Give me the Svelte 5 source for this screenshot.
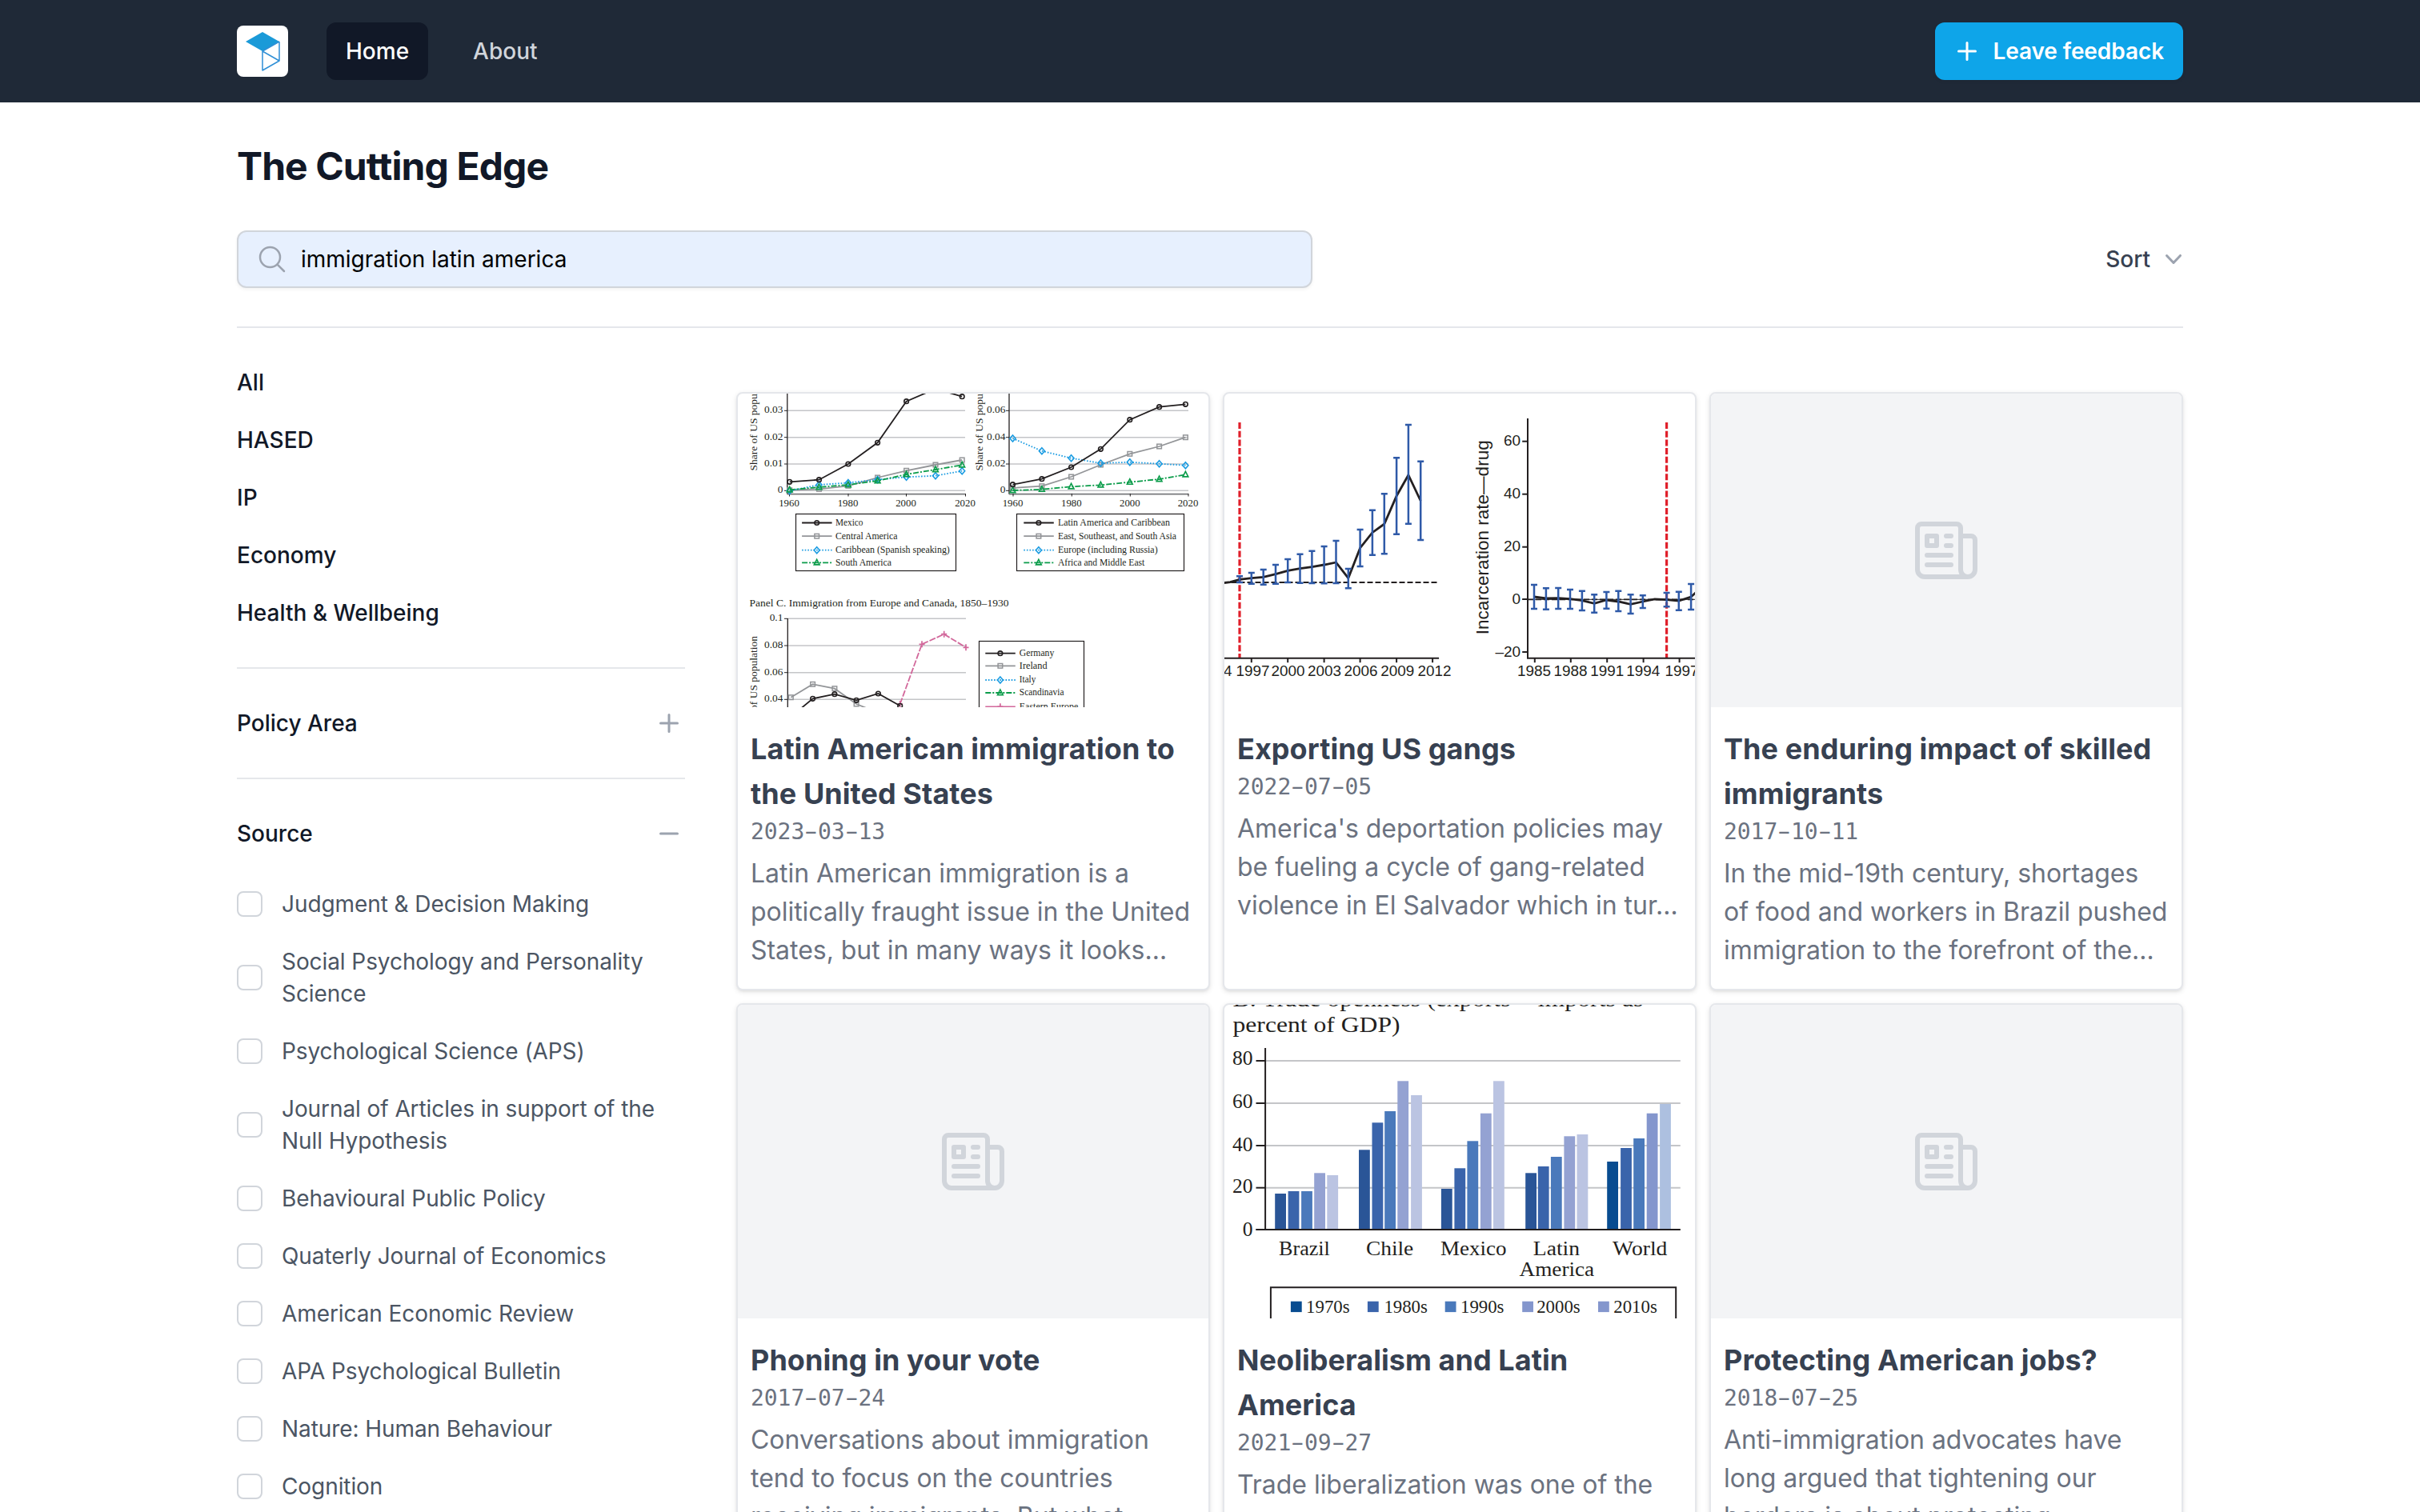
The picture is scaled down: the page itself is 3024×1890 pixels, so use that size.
<script>
  const categories = ['All', 'HASED', 'IP', 'Economy', 'Health & Wellbeing'];
  const sources = [
    'Judgment & Decision Making',
    'Social Psychology and Personality Science',
    'Psychological Science (APS)',
    'Journal of Articles in support of the Null Hypothesis',
    'Behavioural Public Policy',
    'Quaterly Journal of Economics',
    'American Economic Review',
    'APA Psychological Bulletin',
    'Nature: Human Behaviour',
    'Cognition'
  ];
  const articles = [
    { chart: 'shares', title: 'Latin American immigration to the United States', date: '2023-03-13', text: 'Latin American immigration is a politically fraught issue in the United States, but in many ways it looks…' },
    { chart: 'gangs', title: 'Exporting US gangs', date: '2022-07-05', text: "America's deportation policies may be fueling a cycle of gang-related violence in El Salvador which in tur…" },
    { chart: '', title: 'The enduring impact of skilled immigrants', date: '2017-10-11', text: 'In the mid-19th century, shortages of food and workers in Brazil pushed immigration to the forefront of the…' },
    { chart: '', title: 'Phoning in your vote', date: '2017-07-24', text: 'Conversations about immigration tend to focus on the countries receiving immigrants. But what…' },
    { chart: 'trade', title: 'Neoliberalism and Latin America', date: '2021-09-27', text: 'Trade liberalization was one of the' },
    { chart: '', title: 'Protecting American jobs?', date: '2018-07-25', text: 'Anti-immigration advocates have long argued that tightening our borders is about protecting…' }
  ];

  // Immigration share charts: series share x positions and list only y values.
  const BLACK = '#231f20', GREY = '#939598', BLUE = '#1b9ce2', GREEN = '#0b9c4a', PINK = '#d2689b';
  const leftX = [64.7, 101.5, 137.9, 174.6, 210.6, 247, 280.2];
  const rightX = [343.5, 379.9, 416.6, 453.4, 489.8, 526.6, 559.4];
  const lowX = [66.3, 93.6, 120.9, 148.1, 175.4, 202.7];
  const zip = (xs, ys) => ys.map((y, i) => [xs[i], y]);
  const series = [
    { m: 'square', c: GREY, d: '', p: zip(leftX, [120.7, 119.3, 115.3, 105, 96.3, 89, 83]) },
    { m: 'diamond', c: BLUE, d: '1.6 2', p: zip(leftX, [121.5, 114, 111.5, 107.5, 104.3, 102.7, 96.7]) },
    { m: 'triangle', c: GREEN, d: '7 2 2 2', p: zip(leftX, [120.3, 117, 114, 109, 101, 95, 89.3]) },
    { m: 'circle', c: BLACK, d: '', p: zip(leftX, [110.3, 107.7, 88, 61.3, 9.7, -6, 3.7]) },
    { m: 'square', c: GREY, d: '', p: zip(rightX, [118, 115.7, 104, 89, 75.3, 66, 54.7]) },
    { m: 'diamond', c: BLUE, d: '1.6 2', p: zip(rightX, [56, 71.7, 80.7, 87, 85.7, 87.7, 89.7]) },
    { m: 'triangle', c: GREEN, d: '7 2 2 2', p: zip(rightX, [121, 119.7, 116.3, 114.3, 110.7, 107, 101.3]) },
    { m: 'circle', c: BLACK, d: '', p: zip(rightX, [113.7, 106.7, 92, 69.3, 32.7, 16.7, 13.3]) },
    { m: 'square', c: GREY, d: '', p: zip(lowX, [379.7, 363.3, 368.7, 388, 399]) },
    { m: 'plus', c: PINK, d: '8 2', p: [[202.7, 388], [230, 313.3], [257.7, 300.7], [285, 317.3]] },
    { m: 'circle', c: BLACK, d: '', p: zip(lowX, [404, 381.3, 375.7, 383.3, 375, 390.3]) }
  ];
  const styles = [['circle', BLACK, ''], ['square', GREY, ''], ['diamond', BLUE, '1.6 2'], ['triangle', GREEN, '7 2 2 2'], ['plus', PINK, '']];
  const legends = [
    { x: 80.1, tx: 122, ys: [161.5, 178.2, 195.7, 211.3], items: [['Mexico', 34.4], ['Central America', 77.5], ['Caribbean (Spanish speaking)', 142.8], ['South America', 70]] },
    { x: 357.3, tx: 400, ys: [161.5, 178.2, 195.7, 211.3], items: [['Latin America and Caribbean', 140], ['East, Southeast, and South Asia', 148], ['Europe (including Russia)', 124.6], ['Africa and Middle East', 108.3]] },
    { x: 309.3, tx: 351.8, ys: [324.7, 340.3, 358, 374, 391.3], items: [['Germany', 43.5], ['Ireland', 34.8], ['Italy', 20.5], ['Scandinavia', 55.7], ['Eastern Europe', 73.5]] }
  ];
  const grids = [
    { x1: 62, x2: 284, tx: 56.4, rows: [[21.3, '0.03'], [54.7, '0.02'], [88, '0.01'], [121.3, '0']] },
    { x1: 339, x2: 563, tx: 334.5, rows: [[21.3, '0.06'], [54.7, '0.04'], [88, '0.02'], [121.3, '0']] },
    { x1: 62, x2: 285, tx: 56.4, rows: [[281.3, '0.1'], [315, '0.08'], [348.7, '0.06'], [382.3, '0.04']] }
  ];
  const years = [[64, '1960'], [137.5, '1980'], [210, '2000'], [284, '2020'], [343.5, '1960'], [416.8, '1980'], [489.8, '2000'], [562.5, '2020']];
  const pts = (p) => p.map((q) => q.join(',')).join(' ');

  // Plot units for the two scanned figures.
  const X = (v) => +(v * 0.4018 - 20).toFixed(1);
  const Y = (v) => +(v / 3 - 12).toFixed(1);
  const Z = (v) => +(v / 3 - 16).toFixed(1);

  const bars = [
    [97, 721, 744], [134, 708, 749], [171, 696, 752], [209, 678, 749], [247, 657, 744], [285, 638, 746], [322, 626, 747], [360, 609, 748],
    [397, 588, 747], [435, 693, 766], [472, 546, 684], [510, 473, 641], [547, 412, 637], [585, 277, 563], [622, 153, 524], [660, 290, 585],
    [1013, 753, 843], [1050, 766, 845], [1088, 765, 843], [1125, 771, 843], [1162, 776, 849], [1200, 790, 857], [1238, 780, 842],
    [1275, 776, 852], [1313, 790, 861], [1351, 793, 840], [1425, 783, 835], [1463, 779, 848], [1501, 750, 846]
  ];
  const trends = [
    [[46, 746], [68, 743], [97, 733], [134, 728], [171, 724], [209, 713], [247, 700], [285, 692], [322, 686], [360, 678], [397, 669], [435, 728], [472, 615], [510, 557], [547, 525], [585, 420], [622, 341], [660, 438]],
    [[1013, 798], [1050, 804], [1088, 803], [1125, 806], [1162, 812], [1200, 823], [1238, 810], [1275, 816], [1313, 826], [1351, 816], [1388, 807], [1425, 809], [1463, 813], [1501, 798], [1518, 780]]
  ];
  const trendPts = (t) => t.map(([x, y]) => X(x) + ',' + Y(y)).join(' ');
  const gangYears = [[21, '1994'], [138, '1997'], [248, '2000'], [361, '2003'], [474, '2006'], [588, '2009'], [703, '2012'], [1013, '1985'], [1126, '1988'], [1240, '1991'], [1352, '1994'], [1472, '1997']];
  const gangTicks = [134, 247, 360, 472, 585, 697, 1015, 1127, 1240, 1353, 1465];
  const gangRows = [[215, '60'], [413, '40'], [611, '20'], [807, '0'], [1005, '–20']];

  const shades = ['#2a5597', '#3a64ab', '#4a79bb', '#94a2d2', '#bbc4e2'];
  const worldShades = ['#084c90', '#3a64ab', '#4a79bb', '#8496cd', '#adc0e0'];
  const groups = [
    { c: shades, b: [[207, 756], [248, 747], [289, 747], [329, 679], [369, 687]] },
    { c: shades, b: [[468, 592], [509, 490], [548, 447], [588, 334], [630, 387]] },
    { c: shades, b: [[724, 738], [765, 661], [805, 559], [846, 455], [886, 334]] },
    { c: shades, b: [[986, 679], [1025, 654], [1065, 618], [1106, 541], [1146, 534]] },
    { c: worldShades, b: [[1240, 636], [1282, 585], [1322, 549], [1363, 455], [1404, 420]] }
  ];
  const regions = [[219, 378, 986, 'Brazil'], [490, 638, 986, 'Chile'], [722, 927, 986, 'Mexico'], [1010, 1155, 986, 'Latin'], [967, 1200, 1064, 'America'], [1257, 1427, 986, 'World']];
  const tradeRows = [[258, 272, '80'], [417, 435, '60'], [576, 598, '40'], [734, 754, '20'], [891, 915, '0']];
  const decades = [[256, 304, '1970s', '#084c90'], [495, 546, '1980s', '#3a64ab'], [736, 784, '1990s', '#4a79bb'], [976, 1021, '2000s', '#8496cd'], [1212, 1260, '2010s', '#8496cd']];
</script>

{#snippet marker(kind, x, y, c)}
  {#if kind === 'circle'}
    <circle cx={x} cy={y} r="2.8" fill="none" stroke={c} stroke-width="1.6" />
  {:else if kind === 'square'}
    <rect x={x - 2.8} y={y - 2.8} width="5.6" height="5.6" fill="none" stroke={c} stroke-width="1.5" />
  {:else if kind === 'diamond'}
    <path d="M{x} {y - 4}l3.5 4l-3.5 4l-3.5 -4z" fill="none" stroke={c} stroke-width="1.6" />
  {:else if kind === 'triangle'}
    <path d="M{x} {y - 4}l3.4 6.6h-6.8z" fill="none" stroke={c} stroke-width="1.6" />
  {:else}
    <path d="M{x} {y - 4}v8M{x - 3.5} {y}h7" fill="none" stroke={c} stroke-width="1.7" />
  {/if}
{/snippet}

{#snippet plusIcon()}
  <svg class="icon" viewBox="0 0 20 20" fill="currentColor"><path d="M10.75 4.75a.75.75 0 00-1.5 0v4.5h-4.5a.75.75 0 000 1.5h4.5v4.5a.75.75 0 001.5 0v-4.5h4.5a.75.75 0 000-1.5h-4.5v-4.5z" /></svg>
{/snippet}

{#snippet sharesChart()}
  <svg class="chart serif" viewBox="0 0 588 392">
    {#each grids as g}
      {#each g.rows as [y, label]}
        <path d="M{g.x1} {y}H{g.x2}" stroke="#c4c5c8" stroke-width="1.5" />
        <path d="M{g.x1 - 4} {y}h4" stroke="#231f20" stroke-width="1" />
        <text x={g.tx} y={y + 3} font-size="13.4" text-anchor="end">{label}</text>
      {/each}
    {/each}
    <path d="M61.8 0V125.7M339 0V125.7M62.3 281V392" stroke="#231f20" stroke-width="1.3" />
    <path d="M61.8 125.7H284M339 125.7H563" stroke="#77787b" stroke-width="1.8" />
    {#each years as [x, label]}
      <path d="M{x + 0.5} 125v3.5" stroke="#231f20" stroke-width="1" />
      <text {x} y="140.7" font-size="12.8" text-anchor="middle">{label}</text>
    {/each}
    {#each series as s}
      <polyline points={pts(s.p)} fill="none" stroke={s.c} stroke-width="1.8" stroke-dasharray={s.d || 'none'} />
      {#each s.p as [x, y]}{@render marker(s.m, x, y, s.c)}{/each}
    {/each}
    <g fill="none" stroke="#231f20" stroke-width="1.2">
      <rect x="72.5" y="150.5" width="200" height="71" />
      <rect x="348.5" y="150.5" width="209" height="71" />
      <rect x="301.5" y="309.5" width="131" height="100" />
    </g>
    {#each legends as l}
      {#each l.items as [label, w], i}
        <path d="M{l.x} {l.ys[i]}h37.5" stroke={styles[i][1]} stroke-width="1.8" stroke-dasharray={styles[i][2] || 'none'} />
        {@render marker(styles[i][0], l.x + 18.6, l.ys[i], styles[i][1])}
        <text x={l.tx} y={l.ys[i] + 3.4} font-size="12" textLength={w} lengthAdjust="spacingAndGlyphs">{label}</text>
      {/each}
    {/each}
    <text x="14.5" y="265.7" font-size="13" textLength="324" lengthAdjust="spacingAndGlyphs">Panel C. Immigration from Europe and Canada, 1850–1930</text>
    <text transform="translate(23.6 96.5) rotate(-90)" font-size="13.4" textLength="127" lengthAdjust="spacingAndGlyphs">Share of US population</text>
    <text transform="translate(305.8 96.5) rotate(-90)" font-size="13.4" textLength="127" lengthAdjust="spacingAndGlyphs">Share of US population</text>
    <text transform="translate(23.6 430) rotate(-90)" font-size="13.4" textLength="127" lengthAdjust="spacingAndGlyphs">Share of US population</text>
  </svg>
{/snippet}

{#snippet gangsChart()}
  <svg class="chart sans" viewBox="0 0 588 392">
    <path d="M{X(97)} 36V330M{X(1425)} 36V330" stroke="#e0202b" stroke-width="3.2" stroke-dasharray="8 2.7" />
    <path d="M{X(46)} {Y(744)}H{X(717)}" stroke="#231f20" stroke-width="2" stroke-dasharray="7 3" />
    <path d="M{X(976)} {Y(808)}H588" stroke="#231f20" stroke-width="1" />
    <path d="M{X(993)} {Y(808)}H588" stroke="#231f20" stroke-width="1.8" stroke-dasharray="7 3" />
    <path d="M0 {Y(1028)}H{X(717)}M{X(993)} {Y(129)}V{Y(1028)}H588" fill="none" stroke="#231f20" stroke-width="2" />
    {#each trends as t}
      <polyline points={trendPts(t)} fill="none" stroke="#231f20" stroke-width="2.8" />
    {/each}
    {#each bars as [x, a, b]}
      <path d="M{X(x)} {Y(a)}V{Y(b)}M{X(x) - 4} {Y(a)}h8M{X(x) - 4} {Y(b)}h8" stroke="#2f5aa8" stroke-width="2.5" />
    {/each}
    {#each gangTicks as x}
      <path d="M{X(x)} {Y(1028)}v5.5" stroke="#231f20" stroke-width="2" />
    {/each}
    {#each gangYears as [x, label]}
      <text x={X(x) - 21} y={Y(1094)} font-size="18" textLength="42" lengthAdjust="spacingAndGlyphs">{label}</text>
    {/each}
    {#each gangRows as [y, label]}
      <path d="M{X(976)} {Y(y)}H{X(993)}" stroke="#231f20" stroke-width="2" />
      <text x={X(971)} y={Y(y) + 5.6} font-size="19" text-anchor="end">{label}</text>
    {/each}
    <text transform="translate({X(870)} {Y(940)}) rotate(-90)" font-size="21.5" textLength="243" lengthAdjust="spacingAndGlyphs">Incarceration rate—drug</text>
  </svg>
{/snippet}

{#snippet tradeChart()}
  <svg class="chart serif" viewBox="0 0 588 392">
    <text x={X(76)} y={Z(53)} font-size="27" textLength="513" lengthAdjust="spacingAndGlyphs">B. Trade openness (exports + imports as</text>
    <text x={X(76)} y={Z(150)} font-size="27.5" textLength="209" lengthAdjust="spacingAndGlyphs">percent of GDP)</text>
    {#each tradeRows as [y, base, label]}
      <path d="M{X(177)} {Z(y)}H{X(1468)}" stroke="#c4c5c8" stroke-width="2" />
      <path d="M{X(148)} {Z(y)}H{X(177)}" stroke="#231f20" stroke-width="2" />
      <text x={X(138)} y={Z(base)} font-size="25.5" text-anchor="end">{label}</text>
    {/each}
    {#each groups as g}
      {#each g.b as [x, y], i}
        <rect x={X(x)} y={Z(y)} width="13.8" height={Z(891) - Z(y)} fill={g.c[i]} />
      {/each}
    {/each}
    <path d="M{X(177)} {Z(210)}V{Z(891)}" stroke="#231f20" stroke-width="2" />
    <path d="M{X(148)} {Z(891)}H{X(1468)}" stroke="#231f20" stroke-width="2.2" />
    {#each regions as [a, b, y, label]}
      <text x={X(a)} y={Z(y)} font-size="25" textLength={X(b) - X(a)} lengthAdjust="spacingAndGlyphs">{label}</text>
    {/each}
    <path d="M{X(194)} 400V{Z(1108)}H{X(1454)}V400" fill="none" stroke="#231f20" stroke-width="2" />
    {#each decades as [x, tx, label, c]}
      <rect x={X(x)} y={Z(1160)} width="13.8" height="13.4" fill={c} />
      <text x={X(tx)} y={Z(1202)} font-size="22.5" textLength="54.5" lengthAdjust="spacingAndGlyphs">{label}</text>
    {/each}
  </svg>
{/snippet}

<div class="page">
  <header>
    <div class="wrap bar">
      <svg class="logo" viewBox="0 0 64 64">
        <rect width="64" height="64" rx="8" fill="#fff" />
        <path d="M32 8L53 20L32 32L11 20Z" fill="#1b9ad8" />
        <path d="M53 20V44L32 56V32L53 44M32 32L53 20" fill="none" stroke="#2f8fd6" stroke-width="1.5" stroke-linejoin="round" />
      </svg>
      <nav>
        <a class="active" href="#home">Home</a>
        <a href="#about">About</a>
      </nav>
      <button class="feedback">{@render plusIcon()}<span>Leave feedback</span></button>
    </div>
  </header>

  <main class="wrap">
    <h1>The Cutting Edge</h1>
    <div class="tools">
      <div class="search">
        <svg class="icon" viewBox="0 0 24 24" fill="none" stroke="currentColor" stroke-width="1.5" stroke-linecap="round"><path d="M21 21l-5.197-5.197m0 0A7.5 7.5 0 105.196 5.196a7.5 7.5 0 0010.607 10.607z" /></svg>
        <span>immigration latin america</span>
      </div>
      <button class="sort">
        <span>Sort</span>
        <svg class="icon" viewBox="0 0 20 20" fill="currentColor"><path d="M5.23 7.21a.75.75 0 011.06.02L10 11.168l3.71-3.938a.75.75 0 111.08 1.04l-4.25 4.5a.75.75 0 01-1.08 0l-4.25-4.5a.75.75 0 01.02-1.06z" /></svg>
      </button>
    </div>

    <div class="columns">
      <aside>
        <ul class="categories">
          {#each categories as c}<li>{c}</li>{/each}
        </ul>
        <section>
          <h3>Policy Area {@render plusIcon()}</h3>
        </section>
        <section>
          <h3>Source
            <svg class="icon" viewBox="0 0 20 20" fill="currentColor"><path d="M4 10a.75.75 0 01.75-.75h10.5a.75.75 0 010 1.5H4.75A.75.75 0 014 10z" /></svg>
          </h3>
          <div class="options">
            {#each sources as s}
              <div class="option"><i class="box"></i><span>{s}</span></div>
            {/each}
          </div>
        </section>
      </aside>

      <div class="cards">
        {#each articles as a}
          <article>
            <div class="media" class:empty={!a.chart}>
              {#if a.chart === 'shares'}
                {@render sharesChart()}
              {:else if a.chart === 'gangs'}
                {@render gangsChart()}
              {:else if a.chart === 'trade'}
                {@render tradeChart()}
              {:else}
                <svg class="news" viewBox="0 0 78 72" fill="none" stroke="#d1d5db" stroke-width="6" stroke-linecap="round" stroke-linejoin="round">
                  <path d="M57 18H70a5 5 0 0 1 5 5V60a9 9 0 0 1 -18 0V8a5 5 0 0 0 -5 -5H8a5 5 0 0 0 -5 5V60a9 9 0 0 0 9 9H66" />
                  <path d="M15 18h12v12h-12zM39 18h6M39 30h6M15 42h30M15 54h30" />
                </svg>
              {/if}
            </div>
            <div class="body">
              <h2>{a.title}</h2>
              <time>{#each a.date.split('-') as part, i}{#if i}<span class="dash">-</span>{/if}{part}{/each}</time>
              <p>{a.text}</p>
            </div>
          </article>
        {/each}
      </div>
    </div>
  </main>
</div>

<style>
  :global(body) {
    margin: 0;
    background: #fff;
  }
  .page {
    height: 1890px;
    overflow: hidden;
    font-family: Inter, 'Liberation Sans', sans-serif;
    font-size: 28px;
    line-height: 40px;
    color: #111827;
  }
  .wrap {
    width: 2432px;
    margin: 0 auto;
  }
  header {
    background: #1f2937;
  }
  .bar {
    height: 128px;
    display: flex;
    align-items: center;
  }
  .logo {
    width: 64px;
    height: 64px;
  }
  nav {
    display: flex;
    gap: 32px;
    margin-left: 48px;
  }
  nav a {
    padding: 16px 24px;
    border-radius: 12px;
    color: #d1d5db;
    font-weight: 500;
    text-decoration: none;
  }
  nav a.active {
    background: #111827;
    color: #fff;
  }
  button {
    font: inherit;
    border: 0;
    background: none;
    display: flex;
    align-items: center;
  }
  .icon {
    width: 40px;
    height: 40px;
    flex: none;
    color: #9ca3af;
  }
  .feedback {
    margin-left: auto;
    height: 72px;
    padding: 0 24px 0 20px;
    gap: 12px;
    border-radius: 12px;
    background: #0ea5e9;
    color: #fff;
    font-weight: 600;
    letter-spacing: -0.08px;
    box-shadow: 0 2px 4px rgba(0, 0, 0, 0.05);
  }
  .feedback .icon {
    color: #fff;
  }
  h1 {
    margin: 0;
    padding: 48px 0;
    font-size: 48px;
    line-height: 64px;
    font-weight: 700;
    letter-spacing: -0.019em;
  }
  .tools {
    display: flex;
    justify-content: space-between;
    align-items: center;
    padding-bottom: 48px;
    border-bottom: 2px solid #e5e7eb;
  }
  .search {
    box-sizing: border-box;
    width: 1344px;
    height: 72px;
    padding-left: 22px;
    display: flex;
    align-items: center;
    gap: 16px;
    border: 2px solid #d1d5db;
    border-radius: 12px;
    background: #e7f0fe;
    color: #000;
    box-shadow: 0 2px 4px rgba(0, 0, 0, 0.05);
  }
  .sort {
    padding: 0;
    gap: 9px;
    margin-right: -8px;
    color: #374151;
    font-weight: 500;
  }
  .columns {
    display: grid;
    grid-template-columns: 560px 1808px;
    gap: 64px;
    padding-top: 48px;
  }
  ul {
    list-style: none;
    margin: 0;
    padding: 0 0 48px;
    display: flex;
    flex-direction: column;
    gap: 32px;
    font-weight: 500;
  }
  section {
    padding: 48px 0;
    border-top: 2px solid #e5e7eb;
  }
  h3 {
    margin: 0;
    display: flex;
    justify-content: space-between;
    font-size: 28px;
    font-weight: 500;
  }
  .options {
    display: flex;
    flex-direction: column;
    gap: 32px;
    padding-top: 48px;
    color: #4b5563;
    letter-spacing: -0.08px;
  }
  .option {
    display: flex;
    align-items: center;
    gap: 24px;
  }
  .box {
    box-sizing: border-box;
    flex: none;
    width: 32px;
    height: 32px;
    border: 2px solid #d1d5db;
    border-radius: 8px;
  }
  .cards {
    display: grid;
    grid-template-columns: repeat(3, 592px);
    align-content: start;
    gap: 16px;
    padding-top: 32px;
  }
  article {
    box-sizing: border-box;
    border: 2px solid #e5e7eb;
    border-radius: 8px;
    overflow: hidden;
    background: #fff;
    box-shadow: 0 2px 6px rgba(0, 0, 0, 0.1), 0 2px 4px -2px rgba(0, 0, 0, 0.1);
  }
  .media {
    height: 392px;
    display: flex;
    align-items: center;
    justify-content: center;
  }
  .empty {
    background: #f3f4f6;
  }
  .chart {
    display: block;
    width: 588px;
    height: 392px;
    fill: #231f20;
  }
  .serif {
    font-family: 'Liberation Serif', serif;
  }
  .sans {
    font-family: 'Liberation Sans', sans-serif;
  }
  .news {
    width: 78px;
    height: 72px;
  }
  .body {
    padding: 24px 16px;
  }
  h2 {
    margin: 0;
    font-size: 36px;
    line-height: 56px;
    font-weight: 700;
    letter-spacing: 0.06px;
    color: #374151;
  }
  time {
    display: block;
    font-family: 'DejaVu Sans Mono', monospace;
    letter-spacing: -0.05px;
    color: #6b7280;
  }
  .dash {
    display: inline-block;
    transform: scaleX(1.7);
  }
  p {
    margin: 8px 0 0;
    font-size: 32px;
    line-height: 48px;
    letter-spacing: -0.03px;
    color: #6b7280;
  }
</style>
